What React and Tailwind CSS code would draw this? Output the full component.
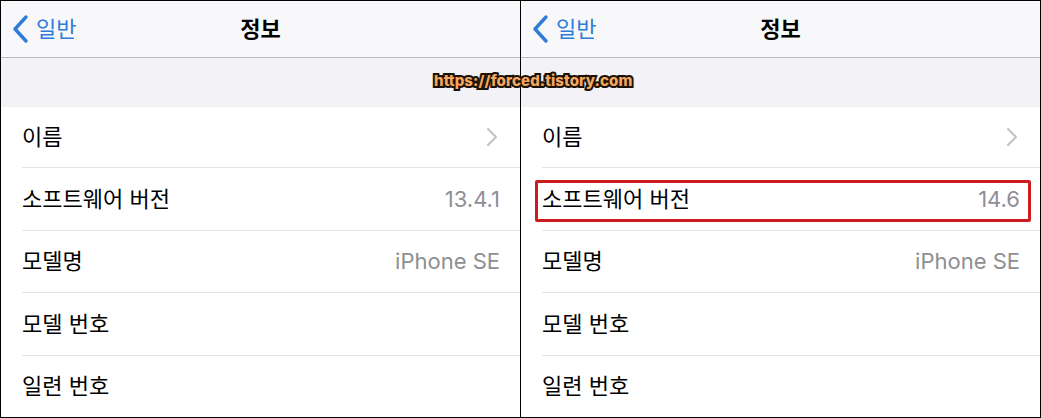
import React from "react";

const FONT = { fontFamily: '"Inter", "Noto Sans CJK KR", sans-serif' };

function BackChevron() {
  return (
    <svg width="20" height="30" viewBox="0 0 20 30" className="shrink-0">
      <polyline points="15,3 4,15 15,27" fill="none" stroke="#2f7bd8" strokeWidth="3.4" strokeLinecap="round" strokeLinejoin="round" />
    </svg>
  );
}

function RowChevron() {
  return (
    <svg width="12" height="20" viewBox="0 0 12 20">
      <polyline points="2,2 10,10 2,18" fill="none" stroke="#c4c4c8" strokeWidth="2.2" strokeLinecap="round" strokeLinejoin="round" />
    </svg>
  );
}

function Row({ label, value, chevron, h, last }) {
  return (
    <div className={`pl-[21px] ${h} ${last ? "flex-1" : ""}`}>
      <div className={`flex h-full items-center pr-[20px] ${last ? "" : "border-b border-[#e3e3e6]"}`}>
        <span className="text-[22px] text-black">{label}</span>
        <span className="flex-1" />
        {value && <span className="text-[22px] text-[#8e8e93]">{value}</span>}
        {chevron && <span className="mr-[2px] flex items-center"><RowChevron /></span>}
      </div>
    </div>
  );
}

function Panel({ version, highlight }) {
  return (
    <div className="relative flex h-full w-[519px] flex-col bg-white">
      <div className="flex h-[57px] shrink-0 items-center border-b border-[#b9b9bd] bg-[#f8f8fa] relative">
        <div className="flex items-center pl-[10px]">
          <BackChevron />
          <span className="ml-[5px] text-[22px] text-[#2f7bd8]">일반</span>
        </div>
        <div className="absolute inset-x-0 top-0 flex h-full items-center justify-center pointer-events-none">
          <span className="text-[22px] font-bold text-black">정보</span>
        </div>
      </div>
      <div className="h-[49px] shrink-0 bg-[#f2f2f7]" />
      <Row label="이름" chevron h="h-[61px]" />
      <Row label="소프트웨어 버전" value={version} h="h-[63px]" />
      <Row label="모델명" value="iPhone SE" h="h-[62px]" />
      <Row label="모델 번호" h="h-[63px]" />
      <Row label="일련 번호" last />
      {highlight && (
        <div className="absolute left-[14px] top-[179px] h-[42px] w-[496px] rounded-[2px] border-[3px] border-[#cc1c22]" />
      )}
    </div>
  );
}

export default function App() {
  return (
    <div style={FONT} className="relative flex h-[418px] w-[1041px] border border-black bg-white">
      <Panel version="13.4.1" />
      <div className="w-px bg-black" />
      <Panel version="14.6" highlight />
      <div className="absolute left-[433px] top-[69px] text-[15px] font-extrabold tracking-[0.1px] text-[#f4a75e] [-webkit-text-stroke:4px_#1a1108] [paint-order:stroke_fill] whitespace-nowrap" style={{ fontFamily: '"Inter", sans-serif' }}>
        https://forced.tistory.com
      </div>
    </div>
  );
}
